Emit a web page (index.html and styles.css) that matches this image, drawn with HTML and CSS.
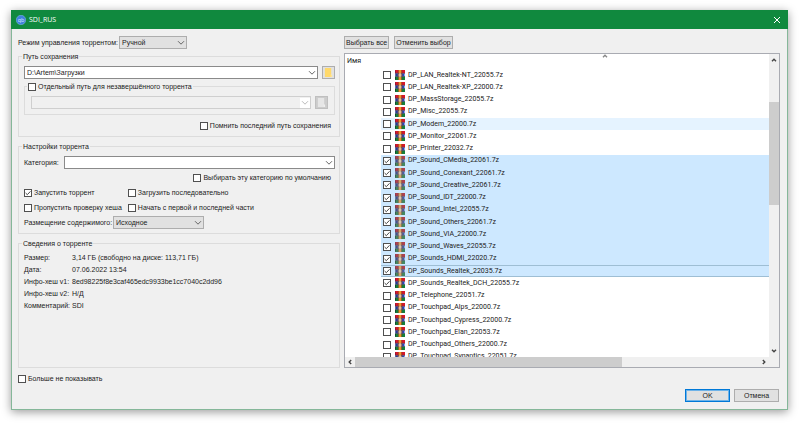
FILE: index.html
```html
<!DOCTYPE html>
<html lang="ru">
<head>
<meta charset="utf-8">
<title>SDI_RUS</title>
<link rel="stylesheet" href="styles.css">
</head>
<body>
<svg class="defs" aria-hidden="true">
  <symbol id="rar" viewBox="0 0 20 20">
    <rect x="0" y="0" width="20" height="7" fill="#d8182a"/>
    <rect x="0" y="1" width="2" height="5" fill="#9a1638"/>
    <rect x="1" y="7" width="18" height="6" fill="#2448c4"/>
    <rect x="1" y="7" width="2" height="5" fill="#25306c"/>
    <rect x="0" y="13" width="20" height="7" fill="#14803a"/>
    <rect x="0" y="14" width="2" height="5" fill="#124a2c"/>
    <path d="M0 6.5h20M0 13h20" stroke="#30304a" stroke-width="1"/>
    <rect x="7" y="0" width="6" height="20" fill="#f0962a"/>
    <path d="M6.5 0v20M13.500 0v20" stroke="#6e3a20" stroke-width="1"/>
    <rect x="5" y="7" width="10" height="7" fill="#5c4560"/>
    <rect x="7" y="8" width="6" height="5" fill="#d8a070"/>
    <path d="M10 6v8" stroke="#f4e2c0" stroke-width="2"/>
  </symbol>
  <symbol id="down" viewBox="0 0 8 6"><path d="M1 1.2l3 3 3-3" fill="none" stroke="currentColor"/></symbol>
  <symbol id="arrow" viewBox="0 0 6 6"><path d="M1 4.2l2-2 2 2" fill="none" stroke="currentColor" stroke-width="1.4"/></symbol>
  <symbol id="folder" viewBox="0 0 10 12"><path d="M1 1h7v7l1 1v2H1z" fill="currentColor"/><path d="M8 8v3" stroke="#fff" stroke-opacity=".5"/></symbol>
</svg>
<main class="window">
  <header class="titlebar">
    <svg class="logo" viewBox="0 0 20 20" aria-hidden="true">
      <circle cx="10" cy="10" r="9.5" fill="#3f83dc" stroke="#8fbdf2"/>
      <text x="10" y="13" text-anchor="middle" class="logo-text">qb</text>
    </svg>
    <h1>SDI_RUS</h1>
    <button class="close" aria-label="Закрыть"><svg viewBox="0 0 8 8"><path d="M1 1l6 6M7 1L1 7" stroke="#fff" stroke-width="1"/></svg></button>
  </header>
  <form class="content">
    <section class="settings">
      <div class="field mode">
        <label for="mode">Режим управления торрентом:</label>
        <span class="combo flat mode-combo"><select id="mode"><option>Ручной</option></select><svg><use href="#down"/></svg></span>
      </div>
      <fieldset class="group">
        <legend>Путь сохранения</legend>
        <div class="path-row">
          <span class="combo"><select aria-label="Путь сохранения"><option>D:\Artem\Загрузки</option></select><svg><use href="#down"/></svg></span>
          <button type="button" class="browse" aria-label="Обзор"><svg><use href="#folder"/></svg></button>
        </div>
        <fieldset class="group inner">
          <legend><label class="check"><input type="checkbox">Отдельный путь для незавершённого торрента</label></legend>
          <div class="path-row">
            <span class="combo disabled"><select aria-label="Путь для незавершённого торрента" disabled><option></option></select><svg><use href="#down"/></svg></span>
            <button type="button" class="browse off" aria-label="Обзор" disabled><svg><use href="#folder"/></svg></button>
          </div>
        </fieldset>
        <label class="check right"><input type="checkbox">Помнить последний путь сохранения</label>
      </fieldset>
      <fieldset class="group options">
        <legend>Настройки торрента</legend>
        <div class="field category">
          <label for="category">Категория:</label>
          <span class="combo"><select id="category"><option></option></select><svg><use href="#down"/></svg></span>
        </div>
        <label class="check right"><input type="checkbox">Выбирать эту категорию по умолчанию</label>
        <div class="checks">
          <label class="check"><input type="checkbox" checked>Запустить торрент</label>
          <label class="check"><input type="checkbox">Загрузить последовательно</label>
          <label class="check"><input type="checkbox">Пропустить проверку хеша</label>
          <label class="check"><input type="checkbox">Начать с первой и последней части</label>
        </div>
        <div class="field">
          <label for="layout">Размещение содержимого:</label>
          <span class="combo flat layout-combo"><select id="layout"><option>Исходное</option></select><svg><use href="#down"/></svg></span>
        </div>
      </fieldset>
      <fieldset class="group info">
        <legend>Сведения о торренте</legend>
        <dl>
          <dt>Размер:</dt><dd>3,14 ГБ (свободно на диске: 113,71 ГБ)</dd>
          <dt>Дата:</dt><dd>07.06.2022 13:54</dd>
          <dt>Инфо-хеш v1:</dt><dd>8ed98225f8e3caf465edc9933be1cc7040c2dd96</dd>
          <dt>Инфо-хеш v2:</dt><dd>Н/Д</dd>
          <dt>Комментарий:</dt><dd>SDI</dd>
        </dl>
      </fieldset>
    </section>
    <section class="files">
      <div class="tools">
        <button type="button">Выбрать все</button>
        <button type="button">Отменить выбор</button>
      </div>
      <div class="tree">
        <div class="view">
          <div class="head">Имя<svg class="sort"><use href="#arrow"/></svg></div>
          <ul>
            <li><label><input type="checkbox"><svg><use href="#rar"/></svg><span>DP_LAN_Realtek-NT_22055.7z</span></label></li>
            <li><label><input type="checkbox"><svg><use href="#rar"/></svg><span>DP_LAN_Realtek-XP_22000.7z</span></label></li>
            <li><label><input type="checkbox"><svg><use href="#rar"/></svg><span>DP_MassStorage_22055.7z</span></label></li>
            <li><label><input type="checkbox"><svg><use href="#rar"/></svg><span>DP_Misc_22055.7z</span></label></li>
            <li class="hover"><label><input type="checkbox"><svg><use href="#rar"/></svg><span>DP_Modem_22000.7z</span></label></li>
            <li><label><input type="checkbox"><svg><use href="#rar"/></svg><span>DP_Monitor_22061.7z</span></label></li>
            <li><label><input type="checkbox"><svg><use href="#rar"/></svg><span>DP_Printer_22032.7z</span></label></li>
            <li class="selected"><label><input type="checkbox" checked><svg><use href="#rar"/></svg><span>DP_Sound_CMedia_22061.7z</span></label></li>
            <li class="selected"><label><input type="checkbox" checked><svg><use href="#rar"/></svg><span>DP_Sound_Conexant_22061.7z</span></label></li>
            <li class="selected"><label><input type="checkbox" checked><svg><use href="#rar"/></svg><span>DP_Sound_Creative_22061.7z</span></label></li>
            <li class="selected"><label><input type="checkbox" checked><svg><use href="#rar"/></svg><span>DP_Sound_IDT_22000.7z</span></label></li>
            <li class="selected"><label><input type="checkbox" checked><svg><use href="#rar"/></svg><span>DP_Sound_Intel_22055.7z</span></label></li>
            <li class="selected"><label><input type="checkbox" checked><svg><use href="#rar"/></svg><span>DP_Sound_Others_22061.7z</span></label></li>
            <li class="selected"><label><input type="checkbox" checked><svg><use href="#rar"/></svg><span>DP_Sound_VIA_22000.7z</span></label></li>
            <li class="selected"><label><input type="checkbox" checked><svg><use href="#rar"/></svg><span>DP_Sound_Waves_22055.7z</span></label></li>
            <li class="selected"><label><input type="checkbox" checked><svg><use href="#rar"/></svg><span>DP_Sounds_HDMI_22020.7z</span></label></li>
            <li class="selected current"><label><input type="checkbox" checked><svg><use href="#rar"/></svg><span>DP_Sounds_Realtek_22035.7z</span></label></li>
            <li><label><input type="checkbox" checked><svg><use href="#rar"/></svg><span>DP_Sounds_Realtek_DCH_22055.7z</span></label></li>
            <li><label><input type="checkbox"><svg><use href="#rar"/></svg><span>DP_Telephone_22051.7z</span></label></li>
            <li><label><input type="checkbox"><svg><use href="#rar"/></svg><span>DP_Touchpad_Alps_22000.7z</span></label></li>
            <li><label><input type="checkbox"><svg><use href="#rar"/></svg><span>DP_Touchpad_Cypress_22000.7z</span></label></li>
            <li><label><input type="checkbox"><svg><use href="#rar"/></svg><span>DP_Touchpad_Elan_22053.7z</span></label></li>
            <li><label><input type="checkbox"><svg><use href="#rar"/></svg><span>DP_Touchpad_Others_22000.7z</span></label></li>
            <li><label><input type="checkbox"><svg><use href="#rar"/></svg><span>DP_Touchpad_Synaptics_22051.7z</span></label></li>
          </ul>
        </div>
        <div class="vbar">
          <svg><use href="#arrow"/></svg>
          <div class="track"><div class="thumb"></div></div>
          <svg class="turn-down"><use href="#arrow"/></svg>
        </div>
        <div class="hbar">
          <svg class="turn-left"><use href="#arrow"/></svg>
          <div class="track"><div class="thumb"></div></div>
          <svg class="turn-right"><use href="#arrow"/></svg>
        </div>
      </div>
    </section>
    <footer>
      <label class="check"><input type="checkbox">Больше не показывать</label>
      <div class="actions">
        <button type="button" class="ok">OK</button>
        <button type="button">Отмена</button>
      </div>
    </footer>
  </form>
</main>
</body>
</html>
```
FILE: styles.css
```css
* {
  box-sizing: border-box;
}

body {
  margin: 0;
  height: 100vh;
  padding: 10px 12px 13px 11px;
  display: flex;
  background: #fff;
  color: #222;
  font: 7px/9px "Liberation Sans", sans-serif;
}

.defs {
  position: absolute;
  width: 0;
  height: 0;
}

svg {
  display: block;
  flex: none;
}

button,
select,
input {
  font: inherit;
  color: inherit;
  margin: 0;
}

.window {
  flex: 1;
  min-width: 0;
  display: flex;
  flex-direction: column;
  background: #f0f0f0;
  border: 1px solid #85b799;
  border-top: 0;
  box-shadow: 0 2px 9px rgba(0, 0, 0, 0.4);
}

.titlebar {
  display: flex;
  align-items: center;
  gap: 3px;
  height: 19px;
  margin: 0 -1px;
  padding: 0 5px;
  background: #10893e;
  color: #fff;
}

.titlebar h1 {
  flex: 1;
  margin: 0;
  font: 7px/10px "Open Sans", sans-serif;
}

.logo {
  width: 10px;
  height: 10px;
}

.logo-text {
  font: 11px "Open Sans", sans-serif;
  fill: #d8e9ff;
}

.close {
  padding: 2px;
  border: 0;
  background: none;
}

.close svg {
  width: 8px;
  height: 8px;
}

.content {
  flex: 1;
  min-height: 0;
  display: grid;
  grid-template: minmax(0, 1fr) auto / 322fr 436fr;
  column-gap: 4px;
  padding: 7px 7px 7px 6px;
}

.settings,
.files {
  display: flex;
  flex-direction: column;
  min-width: 0;
  min-height: 0;
}

.settings {
  gap: 5px;
}

.field {
  display: flex;
  align-items: center;
  gap: 1px;
  white-space: nowrap;
}

.mode {
  margin-bottom: -2px;
}

.combo {
  flex: 1;
  display: grid;
  align-items: center;
  background: #fff;
  border: 1px solid #8a8a8a;
}

.combo select {
  grid-area: 1 / 1;
  width: 100%;
  height: 11px;
  padding: 0 12px 0 2px;
  border: 0;
  border-radius: 0;
  background: none;
  appearance: none;
  opacity: 1;
}

.combo svg {
  grid-area: 1 / 1;
  justify-self: end;
  width: 8px;
  height: 6px;
  margin-right: 1px;
  color: #666;
  pointer-events: none;
}

.combo.flat {
  background: #e1e1e1;
  border-color: #adadad;
}

.combo.disabled {
  background: #f0f0f0;
  border-color: #cfcfcf;
}

.combo.disabled svg {
  box-sizing: content-box;
  padding: 2px 1px;
  margin: 0;
  background: #fff;
  color: #bbb;
}

.mode-combo {
  flex: 0 0 68px;
}

.layout-combo {
  flex: 0 0 91px;
}

.group {
  min-width: 0;
  margin: 0;
  padding: 5px 4px 6px 5px;
  border: 1px solid #dcdcdc;
}

.group legend {
  margin-left: -2px;
  padding: 0 1px;
}

.path-row {
  display: flex;
  gap: 4px;
}

.browse {
  width: 13px;
  height: 13px;
  padding: 0;
  display: grid;
  place-items: center;
  background: #e1e1e1;
  border: 1px solid #adadad;
  color: #ffd96b;
}

.browse svg {
  width: 9px;
  height: 11px;
}

.browse.off {
  background: #ccc;
  border-color: #bfbfbf;
  color: #e6e6e6;
}

.inner {
  margin-top: 3px;
  padding: 5px 6px;
}

.inner legend {
  margin-left: -4px;
}

.check {
  display: flex;
  align-items: center;
  gap: 2px;
  white-space: nowrap;
}

input[type="checkbox"] {
  appearance: none;
  flex: none;
  width: 8px;
  height: 8px;
  border: 1px solid #505050;
  background: #fff;
}

input[type="checkbox"]:checked {
  background: #fff url("data:image/svg+xml,%3Csvg xmlns='http://www.w3.org/2000/svg' viewBox='0 0 6 6'%3E%3Cpath d='M.6 3l1.7 1.7L5.5 1.3' fill='none' stroke='%23333' stroke-width='.9'/%3E%3C/svg%3E");
}

.right {
  justify-content: flex-end;
  margin: 6px 4px 0 0;
}

.options .right {
  margin-top: 4px;
}

.category {
  gap: 5px;
}

.options {
  padding-bottom: 4px;
}

.checks {
  display: grid;
  grid-template-columns: auto 1fr;
  gap: 6px;
  margin: 6px 0 4px;
}

.info {
  flex: 1;
}

.info dl {
  display: grid;
  grid-template-columns: auto 1fr;
  gap: 3px 2px;
  margin: 0;
}

.info dd {
  margin: 0;
}

.tools {
  display: flex;
  gap: 5px;
  margin-bottom: 4px;
}

.tools button,
.actions button {
  height: 13px;
  padding: 0 1px;
  background: #e1e1e1;
  border: 1px solid #adadad;
  line-height: 9px;
  white-space: nowrap;
}

.tree {
  flex: 1;
  min-height: 0;
  display: grid;
  grid-template: minmax(0, 1fr) 10px / minmax(0, 1fr) 10px;
  background: #fff;
  border: 1px solid #a9abb2;
}

.view {
  overflow: hidden;
}

.head {
  display: grid;
  grid-template-columns: 1fr auto 1fr;
  height: 15px;
  padding: 3px 2px;
  font: 7px/9px Roboto, sans-serif;
}

.sort {
  width: 6px;
  height: 6px;
  margin-top: -4px;
  margin-left: 96px;
  color: #888;
}

.tree ul {
  display: grid;
  grid-auto-rows: 1fr;
  height: 294px;
  margin: 0;
  padding: 0 0 0 36px;
  list-style: none;
  font: 7px/9px Roboto, sans-serif;
}

.tree li {
  display: grid;
  padding-left: 2px;
}

.tree label {
  display: flex;
  align-items: center;
}

.tree li svg {
  width: 10px;
  height: 10px;
  margin: 0 3px 0 4px;
}

.hover {
  background: #e5f3ff;
}

.selected {
  background: #cde8ff;
}

.selected svg {
  filter: saturate(0.7);
  opacity: 0.85;
}

.current {
  box-shadow: inset 0 1px #9ebed4, inset 0 -1px #9ebed4;
}

.vbar,
.hbar {
  display: flex;
  align-items: center;
  background: #f0f0f0;
}

.vbar {
  flex-direction: column;
  padding: 3px 0;
}

.hbar {
  grid-column: 1 / -1;
  padding: 0 12px 0 2px;
}

.vbar > svg,
.hbar > svg {
  width: 6px;
  height: 6px;
  color: #444;
}

.track {
  flex: 1;
  display: flex;
}

.vbar .track {
  width: 10px;
  flex-direction: column;
  padding: 39px 0 0;
}

.hbar .track {
  height: 10px;
  padding: 0 2px;
}

.thumb {
  background: #cdcdcd;
}

.vbar .thumb {
  height: 42%;
}

.hbar .thumb {
  width: 66%;
}

.turn-down {
  transform: rotate(180deg);
}

.turn-left {
  transform: rotate(-90deg);
}

.turn-right {
  transform: rotate(90deg);
}

footer {
  grid-column: 1 / -1;
  display: flex;
  justify-content: space-between;
  align-items: flex-start;
  padding-top: 6px;
}

.actions {
  display: flex;
  gap: 4px;
  padding: 15px 1px 0 0;
}

.actions button {
  width: 45px;
}

.actions .ok {
  border: 1px solid #0078d7;
  box-shadow: inset 0 0 0 1px #6fb3e8;
}
```
